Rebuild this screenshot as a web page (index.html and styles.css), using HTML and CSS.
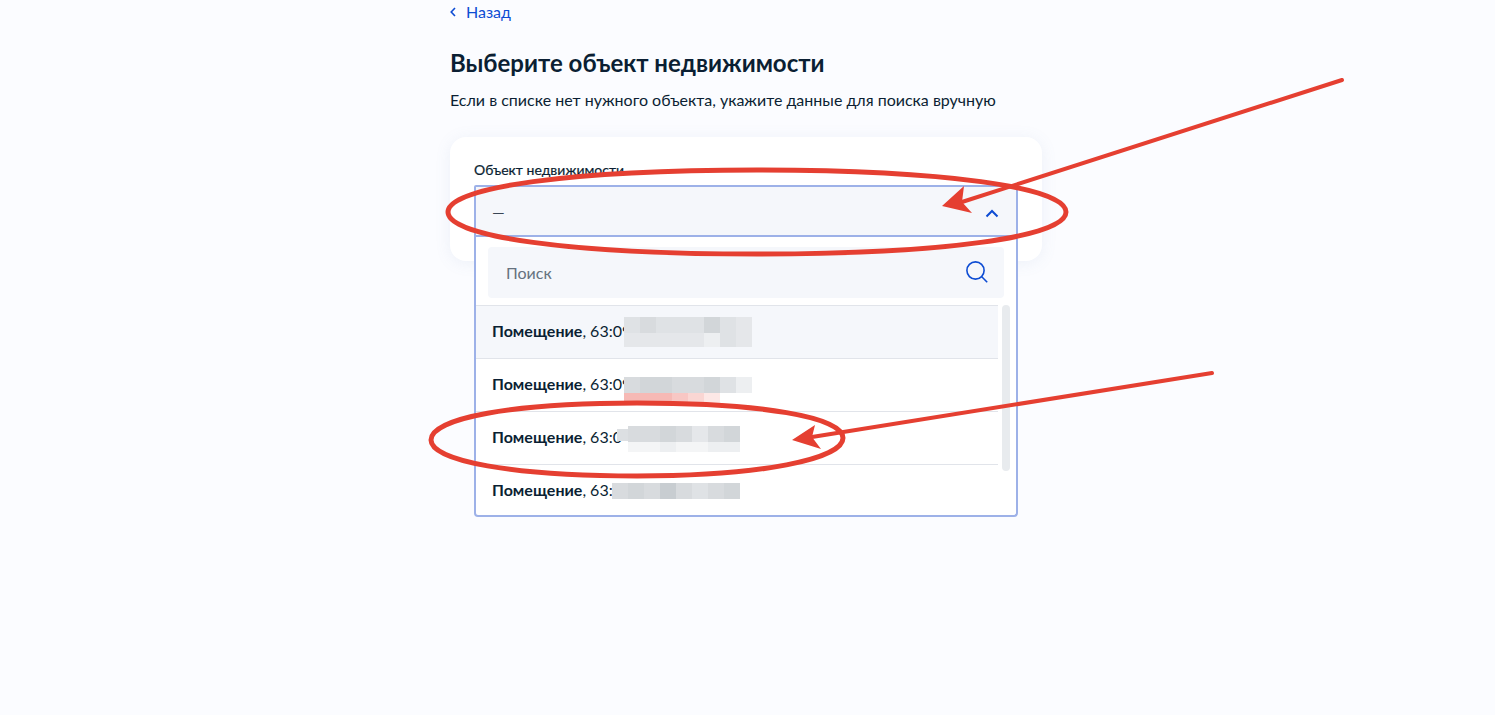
FILE: index.html
```html
<!DOCTYPE html>
<html lang="ru">
<head>
<meta charset="utf-8">
<title>Выберите объект недвижимости</title>
<link rel="stylesheet" href="styles.css">
</head>
<body>
<main class="page">
  <a class="back" href="#">
    <svg class="back-icon" width="6" height="10" viewBox="0 0 6 10"><path d="M5 1 1.2 5 5 9" fill="none" stroke="#0d4cd3" stroke-width="1.6"/></svg>
    <span>Назад</span>
  </a>
  <h1 class="title">Выберите объект недвижимости</h1>
  <p class="lead">Если в списке нет нужного объекта, укажите данные для поиска вручную</p>
  <section class="card">
    <div class="label">Объект недвижимости</div>
    <div class="field">
      <div class="select">
        <span class="value">—</span>
        <svg width="14" height="9" viewBox="0 0 14 9"><path d="M1.5 7.5 7 2l5.5 5.5" fill="none" stroke="#0d4cd3" stroke-width="2"/></svg>
      </div>
      <div class="dropdown">
        <div class="search">
          <span class="placeholder">Поиск</span>
          <svg width="24" height="24" viewBox="0 0 24 24"><circle cx="10.5" cy="10.5" r="8.6" fill="none" stroke="#0d4cd3" stroke-width="1.6"/><path d="m16.8 16.8 5.4 5.4" fill="none" stroke="#0d4cd3" stroke-width="1.6"/></svg>
        </div>
        <div class="list">
          <div class="thumb"></div>
          <div class="row row-active">
            <span><b>Помещение</b>, 63:09</span>
            <div class="blur blur-a">
              <i class="s3"></i><i class="s2"></i><i class="s3"></i><i class="s3"></i><i class="s3"></i><i class="s1"></i><i class="s3"></i><i class="s4"></i>
              <i class="s4"></i><i class="s4"></i><i class="s4"></i><i class="s4"></i><i class="s4"></i><i class="s5"></i><i class="s3"></i><i class="s4"></i>
            </div>
          </div>
          <div class="row">
            <span><b>Помещение</b>, 63:09</span>
            <div class="blur blur-b">
              <i class="s2"></i><i class="s1"></i><i class="s1"></i><i class="s2"></i><i class="s2"></i><i class="s1"></i><i class="s3"></i><i class="s5"></i>
              <i class="p1"></i><i class="p1"></i><i class="p1"></i><i class="p2"></i><i class="p3"></i><i class="p4"></i><i class="s7"></i><i class="s7"></i>
            </div>
          </div>
          <div class="row">
            <span><b>Помещение</b>, 63:0</span>
            <div class="blur blur-c">
              <i class="s2"></i><i class="s2"></i><i class="s1"></i><i class="s2"></i><i class="s4"></i><i class="s2"></i><i class="s1"></i>
              <i class="s6"></i><i class="s6"></i><i class="s5"></i><i class="s6"></i><i class="s6"></i><i class="s5"></i><i class="s5"></i>
            </div>
            <div class="blur-stub"></div>
          </div>
          <div class="row">
            <span><b>Помещение</b>, 63:</span>
            <div class="blur blur-d">
              <i class="s2"></i><i class="s1"></i><i class="s2"></i><i class="s0"></i><i class="s2"></i><i class="s3"></i><i class="s2"></i><i class="s1"></i>
            </div>
          </div>
        </div>
      </div>
    </div>
  </section>
</main>
<svg class="marks" width="1495" height="715" viewBox="0 0 1495 715">
  <g fill="none" stroke="#e53f31" stroke-linecap="round" stroke-linejoin="round">
    <path stroke-width="5" d="M448 212C448 187 572 170 757 170 942 170 1066 187 1066 212 1066 237 942 254 757 254 572 254 448 237 448 212Z"/>
    <path stroke-width="4" d="M1342 80 962 202"/>
    <path stroke-width="5" d="M431 440C431 418 513 403 637 403 761 403 843 417 843 438 843 459 761 476 637 476 513 476 431 461 431 440Z"/>
    <path stroke-width="4" d="M1212 373 812 437"/>
  </g>
  <path fill="#e53f31" d="M942 206 964 186 962 202 972 213Z"/>
  <path fill="#e53f31" d="M792 440 815 425 812 437 821 449Z"/>
</svg>
</body>
</html>
```

FILE: styles.css
```css
* { box-sizing: border-box; }
html, body { margin: 0; height: 100%; overflow: hidden; }
body {
  background: #fbfcff;
  color: #0b1f33;
  font-family: Lato, "Noto Sans", sans-serif;
}
.page { width: 592px; margin-left: 450px; padding-top: 2px; }
.back {
  display: flex; align-items: center; gap: 10px;
  height: 20px; color: #0d4cd3; text-decoration: none;
  font-size: 16px; line-height: 20px;
}
.title {
  margin: 25px 0 0; font-size: 24px; line-height: 32px; font-weight: 700;
}
.lead { margin: 9px 0 0; font-size: 16px; line-height: 24px; }
.card {
  margin-top: 25px; height: 124px; padding: 23px 24px 24px;
  background: #fff; border-radius: 16px;
  box-shadow: 0 2px 16px rgba(105, 135, 190, .1);
}
.label { font-size: 14px; line-height: 20px; height: 25px; -webkit-text-stroke: .2px #0b1f33; }
.field { position: relative; width: 544px; }
.select {
  height: 52px; padding: 0 17px 0 16px;
  display: flex; align-items: center; justify-content: space-between;
  background: #f5f7fb; border: 2px solid #9db1e8; border-radius: 2px 2px 0 0;
}
.select svg { margin-top: 4px; }
.value { font-size: 16px; color: #3a4654; }
.dropdown {
  position: absolute; top: 52px; left: 0; right: 0; height: 280px;
  padding-top: 10px;
  background: #fff; border: 2px solid #9db1e8; border-top: 0;
  border-radius: 0 0 4px 4px; overflow: hidden;
}
.search {
  height: 51px; margin: 0 12px;
  display: flex; align-items: center; justify-content: space-between;
  padding: 0 15px 1px 18px;
  background: #f5f7fb; border-radius: 4px;
}
.placeholder { font-size: 16px; color: #66727f; }
.list { position: relative; margin-top: 7px; }
.thumb {
  position: absolute; top: 0; right: 6px; width: 8px; height: 166px;
  background: #e8ebee; border-radius: 4px;
}
.row {
  position: relative; width: 522px; height: 53px; padding: 0 0 4px 16px;
  display: flex; align-items: center;
  font-size: 16px; border-top: 1px solid #e1e4ea;
}
.row-active { background: #f5f7fb; }
.row b { font-weight: 700; }
.blur { position: absolute; display: grid; grid-template-columns: repeat(8, 16px); }
.blur i { display: block; }
.blur-a { left: 148px; top: 11px; grid-template-rows: 16px 14px; }
.blur-b { left: 148px; top: 18px; grid-template-rows: 16px 12px; }
.blur-c { left: 152px; top: 14px; grid-template-rows: 16px 10px; grid-template-columns: repeat(7, 16px); }
.blur-d { left: 136px; top: 18px; grid-template-rows: 16px; }
.blur-stub { position: absolute; left: 141px; top: 17px; width: 11px; height: 12px; background: #dcdfe2; }
.s0 { background: #c8cdd1; }
.s1 { background: #d2d6d9; }
.s2 { background: #d8dbde; }
.s3 { background: #dfe2e5; }
.s4 { background: #e5e7ea; }
.s5 { background: #edeff1; }
.s6 { background: #f4f5f6; }
.s7 { background: #ffffff; }
.p1 { background: #f6b9b5; }
.p2 { background: #f8c7c4; }
.p3 { background: #fad6d3; }
.p4 { background: #fde8e6; }
.marks { position: absolute; left: 0; top: 0; pointer-events: none; }
```
